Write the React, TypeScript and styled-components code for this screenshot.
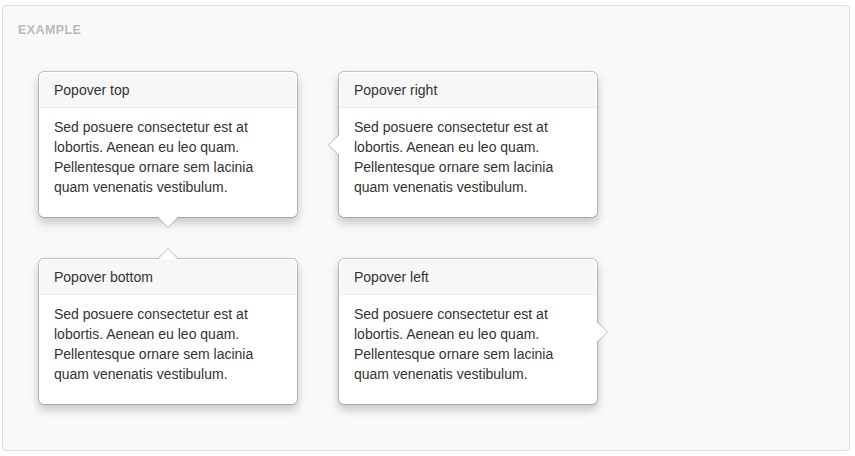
import React from "react";
import styled, { createGlobalStyle, css } from "styled-components";

const Global = createGlobalStyle`
  html, body { margin: 0; padding: 0; background: #fff; }
  body {
    font-family: "Liberation Sans", Arial, Helvetica, sans-serif;
    font-size: 14px;
    line-height: 20px;
    color: #333;
  }
`;

const Page = styled.div`
  padding: 5px 0 0 2px;
`;

const Example = styled.div`
  box-sizing: border-box;
  width: 848px;
  padding: 17px 15px 25px;
  background: #f9f9f9;
  border: 1px solid #ddd;
  border-radius: 4px;
`;

const Label = styled.div`
  font-size: 12.5px;
  line-height: 14px;
  font-weight: bold;
  color: #bbb;
  letter-spacing: 0.4px;
  margin-bottom: 14px;
`;

const Grid = styled.div`
  display: grid;
  grid-template-columns: repeat(2, 300px);
`;

type Placement = "top" | "right" | "bottom" | "left";

const Popover = styled.div`
  position: relative;
  box-sizing: border-box;
  width: 260px;
  margin: 20px;
  padding: 1px;
  background: #fff;
  border: 1px solid rgba(0, 0, 0, 0.2);
  border-radius: 6px;
  box-shadow: 0 5px 10px rgba(0, 0, 0, 0.2);
  background-clip: padding-box;
`;

const Title = styled.h3`
  margin: 0;
  padding: 8px 14px;
  font-size: 14px;
  font-weight: normal;
  line-height: 18px;
  background: #f7f7f7;
  border-bottom: 1px solid #ebebeb;
  border-radius: 5px 5px 0 0;
`;

const Content = styled.div`
  padding: 9px 14px;
  p { margin: 0 0 10px; }
`;

const arrowStyles: Record<Placement, ReturnType<typeof css>> = {
  top: css`
    left: 50%;
    bottom: -11px;
    margin-left: -11px;
    border-bottom-width: 0;
    border-top-color: rgba(0, 0, 0, 0.25);
    &::after {
      bottom: 1px;
      margin-left: -10px;
      border-bottom-width: 0;
      border-top-color: #fff;
    }
  `,
  bottom: css`
    left: 50%;
    top: -11px;
    margin-left: -11px;
    border-top-width: 0;
    border-bottom-color: rgba(0, 0, 0, 0.25);
    &::after {
      top: 1px;
      margin-left: -10px;
      border-top-width: 0;
      border-bottom-color: #fff;
    }
  `,
  right: css`
    top: 50%;
    left: -11px;
    margin-top: -11px;
    border-left-width: 0;
    border-right-color: rgba(0, 0, 0, 0.25);
    &::after {
      left: 1px;
      bottom: -10px;
      border-left-width: 0;
      border-right-color: #fff;
    }
  `,
  left: css`
    top: 50%;
    right: -11px;
    margin-top: -11px;
    border-right-width: 0;
    border-left-color: rgba(0, 0, 0, 0.25);
    &::after {
      right: 1px;
      bottom: -10px;
      border-right-width: 0;
      border-left-color: #fff;
    }
  `,
};

const Arrow = styled.div<{ $placement: Placement }>`
  position: absolute;
  width: 0;
  height: 0;
  border: 11px solid transparent;
  &::after {
    content: "";
    position: absolute;
    width: 0;
    height: 0;
    border: 10px solid transparent;
  }
  ${(p) => arrowStyles[p.$placement]}
`;

const text =
  "Sed posuere consectetur est at lobortis. Aenean eu leo quam. Pellentesque ornare sem lacinia quam venenatis vestibulum.";

const items: { title: string; placement: Placement }[] = [
  { title: "Popover top", placement: "top" },
  { title: "Popover right", placement: "right" },
  { title: "Popover bottom", placement: "bottom" },
  { title: "Popover left", placement: "left" },
];

export default function App() {
  return (
    <>
      <Global />
      <Page>
        <Example>
          <Label>EXAMPLE</Label>
          <Grid>
            {items.map((it) => (
              <Popover key={it.title}>
                <Arrow $placement={it.placement} />
                <Title>{it.title}</Title>
                <Content>
                  <p>{text}</p>
                </Content>
              </Popover>
            ))}
          </Grid>
        </Example>
      </Page>
    </>
  );
}
